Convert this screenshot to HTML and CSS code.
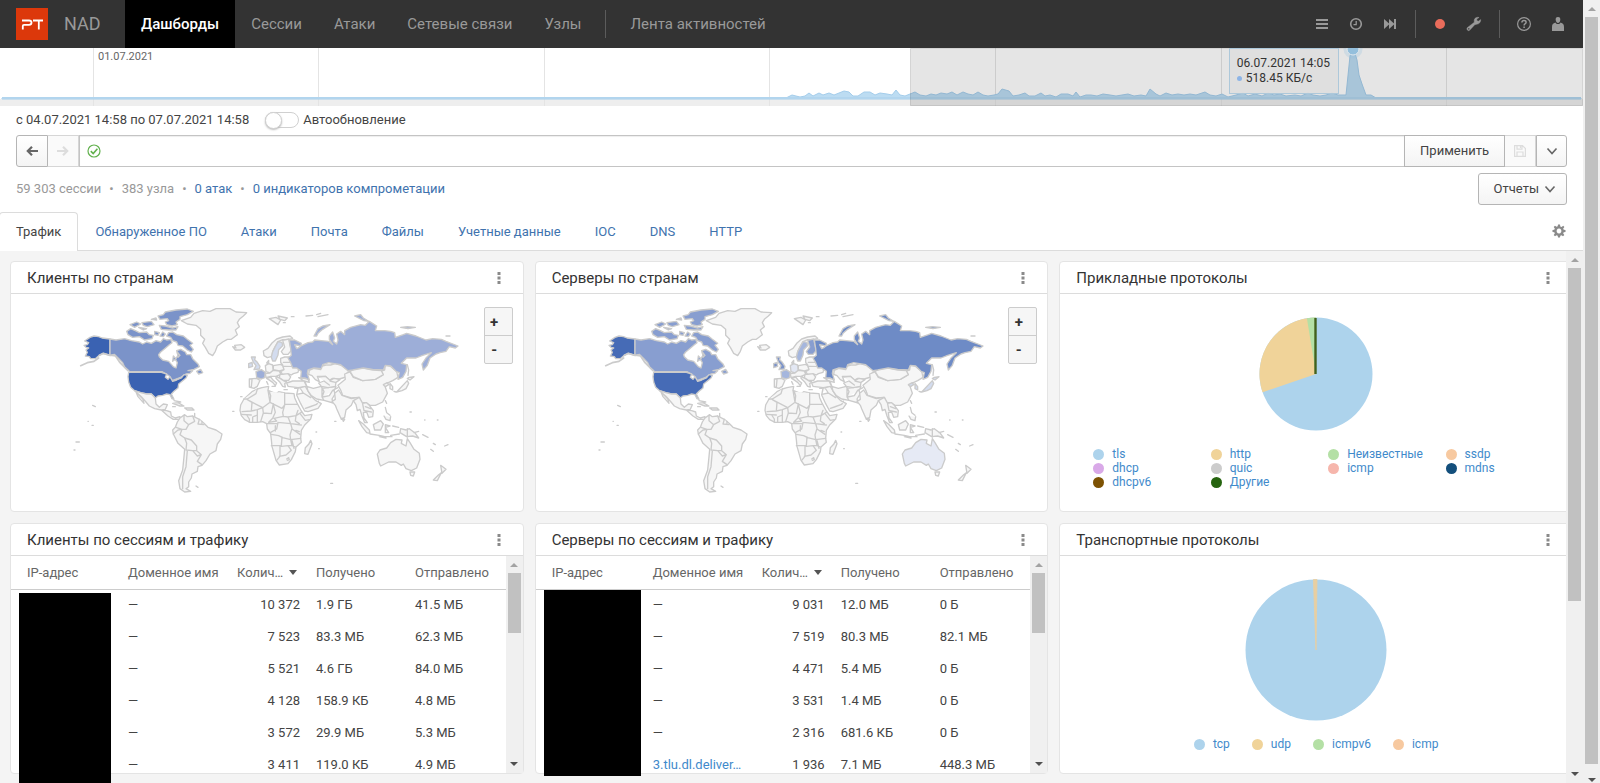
FILE: index.html
```html
<!DOCTYPE html>
<html lang="ru">
<head>
<meta charset="utf-8">
<title>NAD — Дашборды</title>
<link rel="stylesheet" href="styles.css">
</head>
<body>
<svg class="defs" aria-hidden="true">
  <symbol id="kebab" viewBox="0 0 4 12"><path d="M0.5 0h3v3h-3zM0.5 4.500h3v3h-3zM0.500 9h3v3h-3z"/></symbol>
  <symbol id="chevron" viewBox="0 0 12 8"><path d="M1.500 1.500L6 6.500L10.500 1.500" fill="none" stroke="currentColor" stroke-width="1.600"/></symbol>
  <symbol id="world" viewBox="-144 12 1533 651">
    <g class="land">
      <path class="c-us" d="M152 147L128 144L118 140L104 138L92 142L76 153L88 158L84 164L74 166L80 172L88 174L80 180L84 187L78 198L90 200L94 206L108 206L120 196L132 190L152 196Z"/>
      <path class="c-ca" d="M152 147L170 150L196 146L216 152L240 156L250 162L262 156L276 160L290 152L304 156L312 146L322 150L334 148L338 158L330 164L316 176L304 186L298 194L300 200L310 210L328 214L342 230L350 234L354 218L348 208L356 196L352 182L364 178L378 186L382 194L394 194L400 206L416 222L420 230L404 238L386 242L400 242L392 250L380 252L364 262L348 268L338 272L330 258L308 245L210 244L196 232L190 218L180 208L170 198L152 196Z"/>
      <path class="c-ca" d="M340 126L352 134L372 138L384 148L400 160L392 166L402 178L396 186L384 180L370 168L356 166L352 156L340 152L334 142L322 138L328 128Z"/>
      <path class="c-ca" d="M296 78L312 74L318 66L350 60L384 57L402 64L384 74L362 80L362 88L350 96L354 104L338 108L322 104L318 96L328 92L324 86L302 88Z"/>
      <path class="c-ca" d="M202 124L214 116L228 122L240 128L262 126L270 134L282 136L278 146L256 150L240 140L220 142L206 134Z"/>
      <path class="c-ca" d="M412 244L424 238L430 248L418 252ZM342 198L350 206L340 214ZM354 186L362 196L356 202Z"/>
      <path class="c-ca" d="M212 104L232 96L244 102L226 112ZM248 98L276 94L284 104L264 110L252 106ZM300 106L318 108L340 114L356 110L350 120L328 120L306 118ZM276 88L290 84L292 90ZM286 124L300 128L296 136L286 134ZM310 126L318 132L312 140L302 138ZM238 112L262 116L252 120Z"/>
      <path class="c-us" d="M208 247H306L322 252L318 262L326 268L332 260L340 274L352 270L366 264L374 254L384 256L380 264L370 272L358 282L356 294L344 304L336 312L344 328L338 326L332 314L322 312L310 316L296 318L288 324L276 312L262 312L244 308L226 302L214 292L208 276L206 260Z"/>
      <path d="M226 302L244 308L262 312L276 312L288 324L290 342L300 352L312 342L324 344L318 358L306 360L286 356L270 348L260 336L246 320ZM230 306L236 320L254 340L250 326ZM306 360L322 362L334 366L336 378L348 384L362 380L362 388L342 388L326 378Z"/>
      <path d="M340 340L356 338L374 348L362 348ZM376 354L398 354L404 360L384 360ZM340 350h8M406 370v10M344 332l20 4"/>
      <path d="M362 384L376 374L384 380L400 378L420 388L434 400L446 412L470 420L488 432L484 448L474 462L470 482L452 492L440 512L428 526L416 530L414 544L398 552L396 564L388 576L388 590L380 596L394 604L376 606L362 596L358 572L370 540L374 500L376 478L356 460L342 432L340 420L348 412L354 396Z"/>
      <path d="M374 378V392L388 404L380 418L368 418L362 434L376 444L396 450L412 468V482L426 494L414 514L428 524M400 378L406 394L388 404M376 444L382 460L380 480L400 482L412 482M384 482L380 530L370 560V596M342 432L356 420L368 418M350 412L368 418M420 388L416 402L434 404M400 482L414 498L426 494M428 394V404M410 588l6 4"/>
      <path d="M366 92L394 82L404 70L430 62L452 64L470 56L512 56L530 66L562 68L552 78L540 88L534 98L540 110L528 120L534 134L516 148L504 148L490 156L474 168L468 184L460 197L448 190L438 172L430 160L436 148L424 136L424 118L410 106L384 102Z"/>
      <path d="M520 170L530 174L526 166L546 164L556 172L544 180L528 180Z"/>
      <path d="M630 86L650 82L664 90L656 104L642 94ZM656 78L684 84L676 92L662 88ZM696 80h8M672 98h6"/>
      <path d="M740 78L760 76M772 74L784 70M776 80L806 74"/>
      <path d="M100 346l8 4M98 406h4M50 456h10M44 480h3M520 364h4M544 320h4M86 394h1M814 580h6"/>
      <path d="M64 227L84 218L104 214L118 204M120 196L132 190L152 196L166 194L182 218L206 242" class="coast"/>
    </g>
    <g class="land" transform="translate(510 105)">
      <path d="M104 92L102 78L116 70L128 54L142 42L160 36L182 33L190 40L176 44L160 44L146 50L138 64L130 80L128 94L114 98Z"/>
      <path class="c-se" d="M146 50L158 52L160 62L148 74L146 90L138 108L130 108L126 96L130 80L138 64Z"/>
      <path class="c-fi" d="M160 46L178 42L182 60L186 76L176 88L162 88L156 80L166 66Z"/>
      <path class="c-uk" d="M66 96L78 96L76 104L84 112L92 124L90 132L74 134L80 122L72 112Z"/>
      <path class="c-uk" d="M58 116L68 112L70 124L58 128Z"/>
      <path class="c-fr" d="M80 140L96 134L108 142L106 158L96 162L82 158Z"/>
      <path class="c-de" d="M108 122L118 116L130 120L132 136L122 144L110 140Z"/>
      <path d="M60 162L82 160L92 166L84 184L74 190L60 186ZM68 164L66 186"/>
      <path d="M132 122L154 118L160 122L164 134L150 138L132 134ZM122 144L132 136L150 138L154 148L140 154L124 154L110 158L108 146ZM154 100L166 96L180 96L182 106L196 118L208 134L206 142L192 146L186 150L176 146L160 148L154 140L164 134L160 120L154 112ZM152 148L176 146L184 156L178 166L162 166L150 158ZM140 154L152 160L164 168L172 170L166 176L168 186L160 184L152 172L140 160ZM112 160L124 156L132 166L142 174L138 182L130 172L118 164ZM112 114L118 106L118 116ZM112 170L116 178M128 184L138 184M164 194L174 194M196 190L204 190M162 112L182 112M164 124L186 124L196 118"/>
      <path d="M172 174L190 168L224 168L232 184L206 188L176 184ZM208 158L236 162L240 172L224 168ZM226 168L232 182"/>
      <path d="M68 200L84 192L98 188L118 184L116 196L140 206L148 200L166 204L194 206L196 218L204 236L216 258L226 272L248 268L244 282L226 300L216 316L214 340L216 352L200 366L198 380L186 404L176 416L150 420L140 406L128 364L126 344L124 326L114 312L112 296L100 290L84 292L62 292L46 284L36 272L32 256L34 240L44 222Z"/>
      <path d="M84 192L80 206L54 222H44M54 224L68 232L66 258L38 260M54 224L100 248L122 232L116 196M120 200L124 212L122 232L158 250L166 240V204M166 238H204M166 240L160 262L162 274L176 276L200 272L206 256M100 248L102 264L126 266L132 236M132 238L138 262L130 280L118 292M102 264L94 290M66 258L84 254L100 248M84 254L84 270L70 276V290M134 280L162 274M146 292L184 296L188 310L182 330L184 344L160 338L148 332L126 328M146 292L142 312L124 322M184 296L216 300M188 312L212 328M126 362H156L158 336M152 364V394L142 406M150 394L170 390L186 376L176 362L156 364M184 344L214 340M184 344L188 362L198 366M36 268L66 270M52 270L60 282V292M84 270V290M112 296H144M118 292L142 288L134 280M200 272L198 288L210 296M200 272L216 262M172 402L178 398L180 404L174 406M138 302V318M188 346L194 370M176 362L188 362M214 268L228 286L240 284M176 276L184 296M200 316L210 320"/>
      <path d="M244 346L248 356L236 388L226 386L228 368L238 358Z"/>
      <path d="M206 190L228 184L236 198L246 214L258 226L276 236L266 250L236 260L226 258L214 236L202 210ZM202 208L222 204L214 192M222 204L244 218M228 250L240 246L262 238M262 238L268 228"/>
      <path d="M232 184L252 190L276 184L284 200L278 216L284 226L262 222L246 212L236 198ZM278 190L296 188L320 184L314 198L318 206L308 222L312 234L284 226L278 216ZM280 216L300 212L310 196L326 188"/>
      <path d="M240 136L252 130L274 134L276 124L290 120L304 120L318 116L338 122L356 136L368 138L354 142L350 156L330 162L310 160L300 166L288 154L264 154L270 170L258 164L248 152L238 148Z"/>
      <path d="M268 156L288 154L302 166L314 160L332 164L320 172L318 184L296 188L276 184L268 174L284 168L300 180M302 168L318 172"/>
    </g>
    <g class="land" transform="translate(660 0)">
      <path d="M176 286L198 268L196 252L212 246L222 262L250 272L288 268L312 254L302 244L316 240L318 226L332 228L352 244L356 262L340 272L322 280L318 292L324 310L310 336L288 346L272 346L258 338L246 338L240 322L216 324L190 316L184 300Z"/>
      <path d="M212 244L228 236L252 234L280 240L306 242L312 254L288 268L250 272L222 260Z"/>
      <path d="M166 310L178 300L188 316L216 326L238 322L232 338L222 332L216 346L200 360L196 382L186 388L172 356L168 346L158 334L168 328ZM188 384L196 388L192 394Z"/>
      <path d="M222 332L240 322L250 340L262 338L270 346L282 362L280 380L268 382L262 366L252 368L254 384L264 398L256 398L248 378L242 358L234 362L230 344ZM258 350L274 356M256 362L276 366M250 342L254 362"/>
      <path d="M312 284L324 278L328 284L318 290ZM332 280L340 290L340 300L332 296ZM384 266L390 262L404 260L392 270ZM384 272L388 280L380 296L368 302L352 306ZM344 304L350 306M318 332L322 340M384 224L388 240L386 256" class="c-jp"/>
      <path d="M238 392L252 402L270 420L272 430L262 428L248 410ZM272 432L300 436L316 440L338 440M282 404L304 392L312 402L304 420L286 420ZM318 404L332 408L318 412L328 428L318 428ZM340 408L358 412M334 436L360 432M364 416L380 420L390 416L408 430L418 444L400 438L382 440L362 428ZM384 416V442M318 352L322 368M324 370L332 376M314 378L320 388L332 392L334 380M404 428L418 424M430 434L446 442M462 460L468 464M454 478L462 484M496 468L506 464M300 440L320 444M392 366h4M110 426h2M118 476h2M436 390h1M474 390h2M166 394h4"/>
      <path class="c-au" d="M294 492L302 480L322 474L334 458L350 448L368 450L366 460L380 468L384 446L392 458L404 478L420 490L422 508L412 534L396 542L380 536L372 522L366 526L350 516L328 516L304 528L300 520Z"/>
      <path d="M392 546L406 546L402 558L394 556ZM484 526L500 538L488 550ZM486 548L474 572L462 570L478 554Z"/>
      <path class="c-ru" d="M30 150L46 150L66 160L64 168L46 164L52 176L60 172L68 166L86 158L100 156L106 150L126 152L148 154L160 164L150 148L150 138L160 126L166 144L162 154L172 162L176 150L172 132L184 124L196 134L196 122L214 112L244 104L258 106L270 94L292 108L288 122L316 122L334 124L346 128L348 142L372 134L382 130L410 138L440 150L460 146L486 148L500 154L536 168L528 174L510 170L500 184L482 188L470 192L452 204L444 226L432 240L428 222L440 204L456 188L430 196L410 204L382 204L366 220L382 224L380 244L370 262L356 268L360 248L350 244L334 228L318 226L312 240L280 238L252 234L220 240L206 242L184 224L148 218L130 224L126 236L104 234L86 240L84 250L90 270L78 264L64 264L66 244L52 234L40 234L34 218L26 204L36 196L34 176Z"/>
      <path class="c-ru" d="M104 138L116 116L130 108L152 104L130 118L116 130L112 138ZM226 78L244 74L252 84L268 94L254 92ZM364 112L384 110L408 112L386 116ZM500 138L512 138"/>
    </g>
  </symbol>
</svg>

<div class="page">
<div class="main">
  <header class="topbar">
    <a class="brand" href="#">
      <svg class="logo" viewBox="0 0 32 32" aria-hidden="true"><rect width="32" height="32" fill="#dc380b"/><path d="M6 12.500H13Q15.500 12.500 15.500 14.500Q15.500 16.800 13 16.800H8Q6.800 16.800 6.800 18V21.500M17 12.500H27M22.800 12.500V21.500" fill="none" stroke="#fff" stroke-width="1.800"/></svg>
      <span>NAD</span>
    </a>
    <nav class="menu">
      <a class="on" href="#">Дашборды</a><a href="#">Сессии</a><a href="#">Атаки</a><a href="#">Сетевые связи</a><a href="#">Узлы</a><i class="split"></i><a href="#">Лента активностей</a>
    </nav>
    <div class="tools">
      <button aria-label="Список"><svg viewBox="0 0 16 16"><path d="M2 3h12v2H2zM2 7h12v2H2zM2 11h12v2H2z"/></svg></button>
      <button aria-label="История"><svg viewBox="0 0 16 16"><circle cx="8" cy="8" r="5.300" fill="none" stroke="currentColor" stroke-width="1.600"/><path d="M8.200 5V8.700H5.500" fill="none" stroke="currentColor" stroke-width="1.300"/></svg></button>
      <button aria-label="Вперед"><svg viewBox="0 0 16 16"><path d="M2 3L7 7.500V3L12 7.500V3H14V13H12V8.500L7 13V8.500L2 13Z"/></svg></button>
      <i class="split"></i>
      <button class="rec" aria-label="Запись"><svg viewBox="0 0 16 16"><circle cx="8" cy="8" r="5"/></svg></button>
      <button aria-label="Настройка"><svg viewBox="0 0 16 16"><path d="M14.700 3.600L12.300 5.200L10.900 4.500L10.800 3L13.100 1.500C11 .7 8.300 2 8.200 4.300L8.300 6.200L1.500 11.500C-.2 13 2 15.700 3.700 14.200L8.800 8.700L10.700 8.300C13 8.300 15 6 14.700 3.600ZM2.800 12A.8 .8 0 1 1 2.790 12Z" fill-rule="evenodd" stroke="currentColor" stroke-width=".4"/></svg></button>
      <i class="split"></i>
      <button aria-label="Справка"><svg viewBox="0 0 16 16"><circle cx="8" cy="8" r="6.400" fill="none" stroke="currentColor" stroke-width="1.200"/><path d="M5.900 6.500Q6 4.600 8 4.600Q10.100 4.600 10.100 6.300Q10.100 7.300 9 7.900Q8.100 8.400 8.100 9.500M8.100 10.600V12" fill="none" stroke="currentColor" stroke-width="1.500"/></svg></button>
      <button aria-label="Профиль"><svg viewBox="0 0 16 16"><path d="M8 1C10.200 1 10.600 2.800 10.200 4.600C9.900 6.200 9 7 8 7S6.100 6.200 5.800 4.600C5.400 2.800 5.800 1 8 1ZM5.500 6.500C6.300 8.500 9.700 8.500 10.500 6.500C13 7.200 14 8.500 14 11V15H2V11C2 8.500 3 7.200 5.500 6.500Z"/></svg></button>
    </div>
  </header>

  <section class="timeline">
    <svg viewBox="0 0 1583 58" preserveAspectRatio="none" aria-hidden="true">
      <rect y="51" width="1583" height="7" fill="#eeeeee"/>
      <path d="M93.500 0V58M318.500 0V58M544.500 0V58M769.500 0V58M995.500 0V58M1221.500 0V58M1446.500 0V58" stroke="#e4e4e4"/>
      <path d="M2 50H786L792 47L800 49L805 48L809 45L813 48L819 45L823 47L829 45L834 47L839 45L844 43L849 44L853 48L858 48L864 44L870 44L875 47L880 45L887 46L892 47L896 42L900 47L905 48L910 46L915 44L920 47L926 48L931 46L936 47L941 45L947 46L952 44L957 47L963 44L968 46L973 47L978 44L983 47L988 48L994 47L998 46L1002 41L1009 43L1013 48L1019 47L1025 45L1029 48L1035 48L1041 45L1045 48L1050 47L1056 49L1061 46L1068 46L1073 48L1076 44L1080 49L1086 47L1091 47L1097 48L1103 46L1110 47L1116 48L1122 47L1128 46L1134 48L1141 47L1146 48L1150 41L1156 46L1160 48L1166 45L1172 47L1178 46L1184 47L1190 46L1196 47L1205 44L1210 47L1216 48L1222 46L1228 49L1236 47L1243 45L1248 48L1255 46L1262 48L1268 45L1274 47L1280 46L1286 48L1295 47L1301 48L1308 45L1313 47L1320 48L1326 47L1332 45L1338 47L1346 47L1350 8L1352 2H1354L1357 12L1359 27L1362 36L1366 47L1371 47L1376 50H1581L1581 51H2Z" fill="#bcdcf2" stroke="#a4cdeb" stroke-width="1"/>
      <path d="M2 50H1581" stroke="#b2d5ee" stroke-width="2"/>
      <rect x="910.500" y="0.500" width="672" height="57" fill="#000" fill-opacity=".1" stroke="#000" stroke-opacity=".12"/>
      <circle cx="1353" cy="1" r="9.500" fill="#8ebede" fill-opacity=".25"/><circle cx="1353" cy="1" r="6" fill="#94bfdc" stroke="#e0e8ee"/>
    </svg>
    <time class="tick">01.07.2021</time>
    <div class="tip">06.07.2021 14:05<br><i></i> 518.45 КБ/с</div>
  </section>

  <div class="period">
    <span>с 04.07.2021 14:58 по 07.07.2021 14:58</span>
    <label><input type="checkbox" class="toggle">Автообновление</label>
  </div>

  <form class="query">
    <button type="button" class="btn sq" aria-label="Назад"><svg viewBox="0 0 12 10"><path d="M6 0.800L1.800 5L6 9.200M2 5H12" fill="none" stroke="currentColor" stroke-width="2.200"/></svg></button>
    <button type="button" class="btn sq" disabled aria-label="Вперед"><svg viewBox="0 0 12 10"><path d="M6 0.800L10.200 5L6 9.200M10 5H0" fill="none" stroke="currentColor" stroke-width="2.200"/></svg></button>
    <div class="field">
      <svg viewBox="0 0 14 14" aria-hidden="true"><circle cx="7" cy="7" r="6" fill="none" stroke="#62b14e" stroke-width="1.200"/><path d="M3.800 7.200L6.200 9.500L10.400 4.800" fill="none" stroke="#62b14e" stroke-width="1.600"/></svg>
      <input type="text" aria-label="Фильтр">
    </div>
    <button type="button" class="btn">Применить</button>
    <button type="button" class="btn sq" disabled aria-label="Сохранить"><svg viewBox="0 0 12 12"><path d="M.6 .6H8.500L11.400 3.500V11.400H.6ZM3 .6V4.200H8V.6M3 11.400V7H9V11.400M6.500 1V3" fill="none" stroke="currentColor" stroke-width="1.200"/></svg></button>
    <button type="button" class="btn sq" aria-label="Фильтры"><svg class="chev"><use href="#chevron"/></svg></button>
  </form>

  <div class="stats">
    <p><span>59 303 сессии</span><b>•</b><span>383 узла</span><b>•</b><a href="#">0 атак</a><b>•</b><a href="#">0 индикаторов компрометации</a></p>
    <button class="btn report">Отчеты<svg class="chev"><use href="#chevron"/></svg></button>
  </div>

  <nav class="tabs">
    <a class="on" href="#">Трафик</a><a href="#">Обнаруженное ПО</a><a href="#">Атаки</a><a href="#">Почта</a><a href="#">Файлы</a><a href="#">Учетные данные</a><a href="#">IOC</a><a href="#">DNS</a><a href="#">HTTP</a>
    <button aria-label="Настройки"><svg viewBox="0 0 14 14"><path fill-rule="evenodd" d="M6 .5H8L8.300 2.400L9.600 3L11.200 1.800L12.400 3L11.200 4.600L11.700 5.800L13.500 6V8L11.700 8.300L11.200 9.500L12.300 11L11 12.300L9.500 11.200L8.300 11.700L8 13.500H6L5.700 11.700L4.500 11.200L3 12.300L1.700 11L2.800 9.500L2.300 8.300L.5 8V6L2.300 5.700L2.800 4.500L1.700 3L3 1.700L4.500 2.800L5.700 2.300ZM7 4.600A2.400 2.400 0 1 0 7.010 4.600Z"/></svg></button>
  </nav>

  <main class="board">
    <div class="grid">
      <section class="card">
        <header><h2>Клиенты по странам</h2><button aria-label="Меню"><svg><use href="#kebab"/></svg></button></header>
        <div class="body map clients"><svg class="world"><use href="#world"/></svg><div class="zoom"><button>+</button><button>-</button></div></div>
      </section>
      <section class="card">
        <header><h2>Серверы по странам</h2><button aria-label="Меню"><svg><use href="#kebab"/></svg></button></header>
        <div class="body map servers"><svg class="world"><use href="#world"/></svg><div class="zoom"><button>+</button><button>-</button></div></div>
      </section>
      <section class="card">
        <header><h2>Прикладные протоколы</h2><button aria-label="Меню"><svg><use href="#kebab"/></svg></button></header>
        <div class="body chart">
          <svg class="pie" viewBox="-57 -57 114 114" aria-hidden="true"><circle r="56.500" fill="#add3ec"/><path d="M0 0L-53.500 18.200A56.500 56.500 0 0 1 0 -56.500Z" fill="#f0d399"/><path d="M0 0L-9.100 -55.800A56.500 56.500 0 0 1 0 -56.500Z" fill="#b4e0a5"/><path d="M-.5 0V-56" stroke="#42611c" stroke-width="2.400"/></svg>
          <ul class="legend cols">
            <li><i class="blue"></i><a href="#">tls</a></li><li><i class="sand"></i><a href="#">http</a></li><li><i class="green"></i><a href="#">Неизвестные</a></li><li><i class="peach"></i><a href="#">ssdp</a></li>
            <li><i class="violet"></i><a href="#">dhcp</a></li><li><i class="grey"></i><a href="#">quic</a></li><li><i class="pink"></i><a href="#">icmp</a></li><li><i class="navy"></i><a href="#">mdns</a></li>
            <li><i class="brown"></i><a href="#">dhcpv6</a></li><li><i class="forest"></i><a href="#">Другие</a></li>
          </ul>
        </div>
      </section>

      <section class="card">
        <header><h2>Клиенты по сессиям и трафику</h2><button aria-label="Меню"><svg><use href="#kebab"/></svg></button></header>
        <div class="body list">
          <table>
            <thead><tr><th class="ip">IP-адрес</th><th class="dom">Доменное имя</th><th class="cnt">Колич…<i class="sort"></i></th><th class="got">Получено</th><th>Отправлено</th></tr></thead>
            <tbody>
              <tr><td></td><td>—</td><td class="num">10 372</td><td>1.9 ГБ</td><td>41.5 МБ</td></tr>
              <tr><td></td><td>—</td><td class="num">7 523</td><td>83.3 МБ</td><td>62.3 МБ</td></tr>
              <tr><td></td><td>—</td><td class="num">5 521</td><td>4.6 ГБ</td><td>84.0 МБ</td></tr>
              <tr><td></td><td>—</td><td class="num">4 128</td><td>158.9 КБ</td><td>4.8 МБ</td></tr>
              <tr><td></td><td>—</td><td class="num">3 572</td><td>29.9 МБ</td><td>5.3 МБ</td></tr>
              <tr><td></td><td>—</td><td class="num">3 411</td><td>119.0 КБ</td><td>4.9 МБ</td></tr>
            </tbody>
          </table>
          <div class="bar"><i class="up"></i><i class="thumb short"></i><i class="down"></i></div>
        </div>
        <div class="mask mask-clients"></div>
      </section>
      <section class="card">
        <header><h2>Серверы по сессиям и трафику</h2><button aria-label="Меню"><svg><use href="#kebab"/></svg></button></header>
        <div class="body list">
          <table>
            <thead><tr><th class="ip">IP-адрес</th><th class="dom">Доменное имя</th><th class="cnt">Колич…<i class="sort"></i></th><th class="got">Получено</th><th>Отправлено</th></tr></thead>
            <tbody>
              <tr><td></td><td>—</td><td class="num">9 031</td><td>12.0 МБ</td><td>0 Б</td></tr>
              <tr><td></td><td>—</td><td class="num">7 519</td><td>80.3 МБ</td><td>82.1 МБ</td></tr>
              <tr><td></td><td>—</td><td class="num">4 471</td><td>5.4 МБ</td><td>0 Б</td></tr>
              <tr><td></td><td>—</td><td class="num">3 531</td><td>1.4 МБ</td><td>0 Б</td></tr>
              <tr><td></td><td>—</td><td class="num">2 316</td><td>681.6 КБ</td><td>0 Б</td></tr>
              <tr><td></td><td><a href="#">3.tlu.dl.deliver…</a></td><td class="num">1 936</td><td>7.1 МБ</td><td>448.3 МБ</td></tr>
            </tbody>
          </table>
          <div class="bar"><i class="up"></i><i class="thumb short"></i><i class="down"></i></div>
        </div>
        <div class="mask mask-servers"></div>
      </section>
      <section class="card">
        <header><h2>Транспортные протоколы</h2><button aria-label="Меню"><svg><use href="#kebab"/></svg></button></header>
        <div class="body chart">
          <svg class="pie big" viewBox="-71 -71 142 142" aria-hidden="true"><circle r="70.500" fill="#add3ec"/><path d="M0 0L-2.600 -70.500L1 -70.500Z" fill="#e8cfa2" stroke="#e8cfa2" stroke-width=".8"/></svg>
          <ul class="legend row">
            <li><i class="blue"></i><a href="#">tcp</a></li><li><i class="sand"></i><a href="#">udp</a></li><li><i class="green"></i><a href="#">icmpv6</a></li><li><i class="peach"></i><a href="#">icmp</a></li>
          </ul>
        </div>
      </section>
    </div>
    <div class="bar"><i class="up"></i><i class="thumb mid"></i><i class="down"></i></div>
  </main>
</div>
<div class="bar outer"><i class="up"></i><i class="thumb long"></i><i class="down"></i></div>
</div>
</body>
</html>
```

FILE: styles.css
```css
* { box-sizing: border-box; }
body { margin: 0; font: 13px/18px Roboto, "Liberation Sans", sans-serif; color: #444; background: #fff; }
a { color: #3f73ae; text-decoration: none; }
button, input { font: inherit; color: inherit; }
button { padding: 0; border: 0; background: none; }
h2, p, ul { margin: 0; padding: 0; }
svg { display: block; fill: currentColor; }
.defs { position: absolute; width: 0; height: 0; }

.page { display: flex; height: 100vh; overflow: hidden; }
.main { flex: 1; min-width: 0; display: flex; flex-direction: column; }

/* Top bar */
.topbar { flex: none; display: flex; align-items: center; height: 48px; background: #333; color: #999; font-size: 15px; }
.topbar a { color: #999; }
.brand { display: flex; align-items: center; gap: 16px; width: 125px; padding-left: 16px; font-size: 18px; }
.logo { width: 32px; height: 32px; }
.menu { flex: 1; display: flex; align-items: center; }
.menu a { padding: 0 16px; line-height: 48px; white-space: nowrap; }
.topbar .on { background: #000; color: #fff; font-weight: 500; }
.split { width: 1px; height: 28px; background: #5c5c5c; }
.menu .split { margin: 0 8px; }
.tools { display: flex; align-items: center; padding-right: 8px; }
.tools button { width: 34px; height: 34px; display: grid; place-items: center; }
.tools .split { margin: 0 7px 0 8px; }
.tools svg { width: 16px; height: 16px; }
.rec { color: #e96c5b; }

/* Traffic timeline */
.timeline { flex: none; position: relative; height: 58px; }
.timeline svg { width: 100%; height: 58px; }
.tick { position: absolute; left: 98px; top: 2px; font-size: 11px; line-height: 14px; color: #666; }
.tip { position: absolute; top: 0; right: 244px; padding: 7px 8px 7px 7px; border: 1px solid #adc8da; background: rgba(222, 222, 222, .9); font-size: 12px; line-height: 15px; color: #333; height: 46px; }
.tip i { display: inline-block; width: 5px; height: 5px; border-radius: 50%; background: #8db4e6; vertical-align: 1px; margin-right: 1px; }

/* Period, query, totals */
.period { flex: none; display: flex; align-items: center; gap: 16px; padding: 5px 16px 6px; }
.period label { display: flex; align-items: center; gap: 4px; }
.toggle { appearance: none; margin: 0; width: 34px; height: 16px; border: 1px solid #d0d0d0; border-radius: 8px; }
.toggle::before { content: ""; display: block; width: 15px; height: 15px; border: 1px solid #d0d0d0; border-radius: 50%; margin: -1px; background: #fff; box-shadow: 0 1px 2px #bbb; }
.query { flex: none; display: flex; height: 32px; padding: 0 16px; }
.btn { border: 1px solid #b5b5b5; background: linear-gradient(#fff, #f4f4f4); padding: 0 15px; white-space: nowrap; }
.query .btn + .btn { border-left: 0; }
.query .btn:first-child { width: 32px; border-radius: 3px 0 0 3px; }
.query .btn:last-child { border-radius: 0 3px 3px 0; border-left: 1px solid #b5b5b5; }
.sq { width: 31px; padding: 0; display: grid; place-items: center; color: #666; }
.sq svg { width: 12px; height: 12px; }
.btn:disabled { border-color: #d6d6d6; color: #ddd; background: #fafafa; }
.chev, .sq .chev { width: 12px; height: 8px; color: #666; }
.field { flex: 1; display: flex; align-items: center; gap: 8px; padding: 0 7px; border: 1px solid #c4c4c4; border-right: 0; box-shadow: inset 0 1px 1px #eee; }
.field svg { width: 14px; height: 14px; }
.field input { flex: 1; border: 0; outline: 0; background: none; }
.stats { flex: none; display: flex; justify-content: space-between; align-items: center; height: 44px; padding: 0 16px; color: #999; }
.stats b { font-weight: 400; padding: 0 8px; }
.report { display: flex; align-items: center; gap: 5px; height: 32px; padding-right: 10px; border-radius: 3px; color: #444; }

/* Tabs */
.tabs { flex: none; display: flex; height: 39px; margin-top: 1px; border-bottom: 1px solid #dcdcdc; }
.tabs a { padding: 0 16px; border: 1px solid transparent; border-bottom: 0; line-height: 37px; height: 39px; }
.tabs .on { margin-left: -1px; border-color: #dcdcdc; border-radius: 4px 4px 0 0; background: #fff; color: #444; }
.tabs button { margin-left: auto; padding: 0 17px; color: #8a8a8a; }
.tabs button svg { width: 14px; height: 14px; }

/* Dashboard */
.board { flex: 1; min-height: 0; position: relative; overflow: hidden; background: #f4f4f4; }
.grid { display: grid; grid-template-columns: repeat(3, minmax(0, 1fr)); grid-auto-rows: 251px; gap: 11px; padding: 10px 10px 0; }
.card { position: relative; display: flex; flex-direction: column; border: 1px solid #e4e4e4; border-radius: 4px; background: #fff; }
.card header { flex: none; display: flex; justify-content: space-between; align-items: center; height: 32px; padding: 0 20px 0 16px; border-bottom: 1px solid #dcdcdc; }
.card h2 { font-size: 15px; font-weight: 400; color: #333; }
.card header button { width: 8px; height: 20px; display: grid; place-items: center; color: #8a8a8a; }
.card header svg { width: 4px; height: 12px; }
.body { flex: 1; min-height: 0; position: relative; overflow: hidden; }

/* Maps */
.world { width: 100%; height: 100%; }
.land { fill: #f6f6f6; stroke: #cbcbcb; stroke-width: 4; stroke-linejoin: round; stroke-linecap: round; }
.coast { fill: none; stroke-width: 5; }
.c-us { fill: var(--us); }
.c-ca { fill: var(--ca); }
.c-ru { fill: var(--ru); }
.c-fr { fill: var(--fr); }
.c-se { fill: var(--se); }
.c-fi { fill: var(--fi); }
.c-uk { fill: var(--uk); }
.c-de { fill: var(--de); }
.c-au { fill: var(--au); }
.c-jp { fill: var(--jp); }
.clients { --us: #3a62b2; --ca: #7b93c9; --ru: #9daed8; --fr: #9daed8; --se: #d3dcef; --fi: #f6f6f6; --uk: #d3dcef; --de: #f6f6f6; --au: #f6f6f6; --jp: #f6f6f6; }
.servers { --us: #466bb6; --ca: #889ed0; --ru: #6e8bc6; --fr: #a5b6dd; --se: #a5b6dd; --fi: #889ed0; --uk: #7b93c9; --de: #e3e8f4; --au: #e6eaf5; --jp: #d3dcef; }
.zoom { position: absolute; top: 13px; right: 10px; display: flex; flex-direction: column; width: 29px; border: 1px solid #ccc; border-radius: 2px; background: #f6f6f6; }
.zoom button { height: 27px; padding-right: 8px; font-size: 15px; font-weight: 700; color: #333; }
.zoom button + button { height: 28px; border-top: 1px solid #ccc; }

/* Pies */
.chart { display: flex; flex-direction: column; align-items: center; gap: 16px; padding-top: 23px; }
.pie { flex: none; width: 114px; height: 114px; }
.big { width: 142px; height: 142px; }
.legend { list-style: none; font-size: 12px; line-height: 14px; }
.legend li { display: flex; align-items: center; gap: 8px; }
.legend i { width: 11px; height: 11px; border-radius: 50%; }
.legend a { color: #3f8acb; padding-top: 1px; line-height: 13px; }
.cols { align-self: stretch; display: grid; grid-template-columns: repeat(4, 1fr); padding: 0 9px 0 33px; }
.row { display: flex; gap: 22px; }
.blue { background: #add3ec; }
.sand { background: #f0d399; }
.green { background: #b4e0a5; }
.peach { background: #f7c9a0; }
.violet { background: #d9a9e8; }
.grey { background: #ccc; }
.pink { background: #f6b6ac; }
.navy { background: #134f7c; }
.brown { background: #7d5203; }
.forest { background: #26640f; }

/* Tables */
.list { display: flex; align-items: flex-start; }
.list table { flex: 1; table-layout: fixed; border-collapse: collapse; }
.list th, .list td { height: 32px; padding: 0 0 0 16px; text-align: left; font-weight: 400; white-space: nowrap; }
.list th { height: 33px; padding-top: 1px; border-bottom: 1px solid #ccc; color: #666; }
.ip { width: 101px; }
.dom { width: 110px; }
.list .cnt { width: 78px; padding-left: 15px; }
.got { width: 99px; }
.list .num { padding: 0; text-align: right; }
.list td a { color: #3f8acb; }
.sort { display: inline-block; margin-left: 6px; border: 4px solid transparent; border-top: 5px solid #555; border-bottom: 0; vertical-align: 2px; }
.mask { position: absolute; background: #000; }
.mask-clients { left: 8px; top: 69px; width: 92px; height: 192px; }
.mask-servers { left: 8px; top: 66px; width: 97px; height: 186px; }

/* Scrollbars */
.bar { display: flex; flex-direction: column; align-items: center; width: 17px; background: #f0f0f0; padding: 7px 0; flex: none; }
.bar .up { border: 4px solid transparent; border-top: 0; border-bottom: 4px solid #a3a3a3; }
.bar .down { margin-top: auto; border: 4px solid transparent; border-bottom: 0; border-top: 4px solid #505050; }
.thumb { width: 13px; margin-top: 6px; background: #c1c1c1; }
.short { height: 60px; }
.mid { height: 333px; }
.long { flex: 1; margin-bottom: 14px; }
.list .bar { align-self: stretch; }
.board > .bar { position: absolute; top: 0; right: 0; bottom: 0; }
.outer { padding-bottom: 1px; }
```
